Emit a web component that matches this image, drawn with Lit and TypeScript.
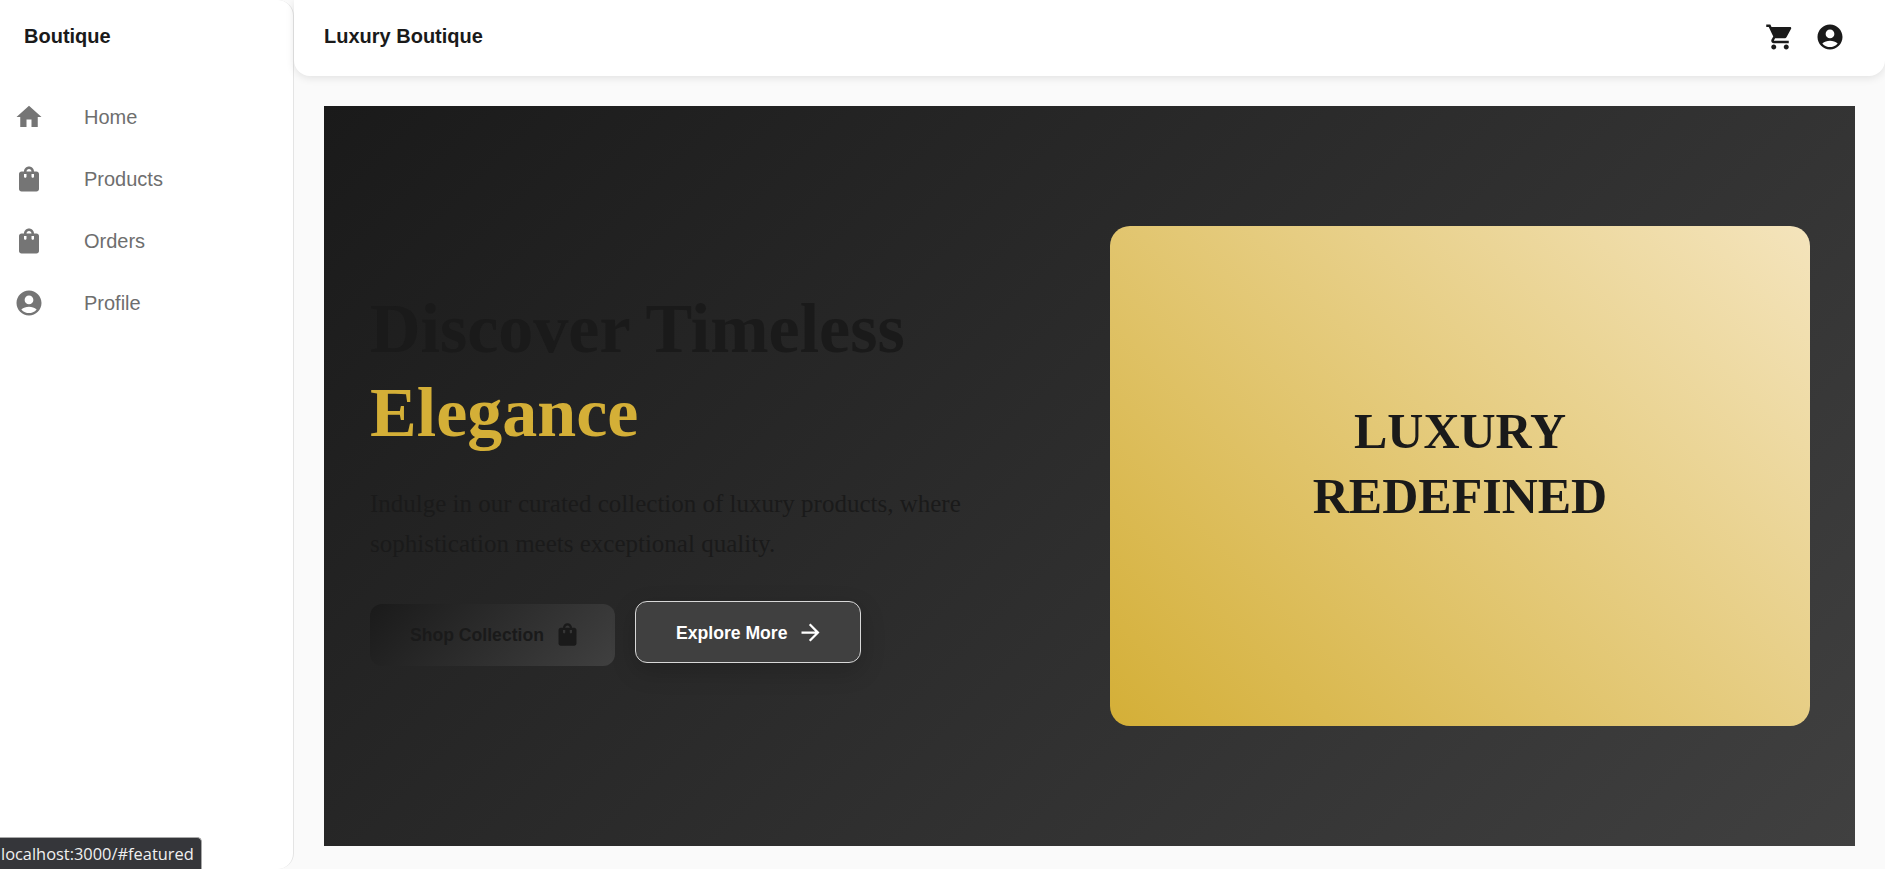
import { LitElement, html, css, svg } from "lit";
import { customElement } from "lit/decorators.js";

const HOME = "M10 20v-6h4v6h5v-8h3L12 3 2 12h3v8z";
const BAG = "M18 6h-2c0-2.21-1.79-4-4-4S8 3.79 8 6H6c-1.1 0-2 .9-2 2v12c0 1.1.9 2 2 2h12c1.1 0 2-.9 2-2V8c0-1.1-.9-2-2-2zm-6-2c1.1 0 2 .9 2 2h-4c0-1.1.9-2 2-2zm-2 6c0 .55-.45 1-1 1s-1-.45-1-1V8h2v2zm6 0c0 .55-.45 1-1 1s-1-.45-1-1V8h2v2z";
const PROFILE = "M12 2C6.48 2 2 6.48 2 12s4.48 10 10 10 10-4.48 10-10S17.52 2 12 2zm0 4c1.93 0 3.5 1.57 3.5 3.5S13.93 13 12 13s-3.5-1.57-3.5-3.5S10.07 6 12 6zm0 14c-2.03 0-4.43-.82-6.14-2.88C7.55 15.8 9.68 15 12 15s4.45.8 6.14 2.12C16.43 19.18 14.03 20 12 20z";
const CART = "M7 18c-1.1 0-1.99.9-1.99 2S5.9 22 7 22s2-.9 2-2-.9-2-2-2zM1 2v2h2l3.6 7.59-1.35 2.45c-.16.28-.25.61-.25.96 0 1.1.9 2 2 2h12v-2H7.42c-.14 0-.25-.11-.25-.25l.03-.12.9-1.63h7.45c.75 0 1.41-.41 1.75-1.03l3.58-6.49c.08-.14.12-.31.12-.48 0-.55-.45-1-1-1H5.21l-.94-2H1zm16 16c-1.1 0-1.99.9-1.99 2s.89 2 1.99 2 2-.9 2-2-.9-2-2-2z";
const ARROW = "m12 4-1.41 1.41L16.17 11H4v2h12.17l-5.58 5.59L12 20l8-8z";

const icon = (d: string, cls = "") => html`<svg class="icon ${cls}" viewBox="0 0 24 24" aria-hidden="true">${svg`<path d=${d}></path>`}</svg>`;

const NAV = [
  ["Home", HOME],
  ["Products", BAG],
  ["Orders", BAG],
  ["Profile", PROFILE],
];

@customElement("app-root")
export class AppRoot extends LitElement {
  static styles = css`
    :host {
      display: flex;
      width: 100%;
      height: 869px;
      overflow: hidden;
      background: #fafafa;
      font-family: "Liberation Sans", Arial, sans-serif;
      position: relative;
    }
    .icon { width: 30px; height: 30px; fill: currentColor; display: block; flex: none; }
    .sidebar {
      box-sizing: border-box;
      width: 294px;
      flex: none;
      height: 869px;
      background: #fff;
      border-right: 1px solid #e4e4e4;
      border-radius: 0 16px 16px 0;
    }
    .brand {
      height: 72px;
      display: flex;
      align-items: center;
      padding-left: 24px;
      font-size: 20px;
      font-weight: 700;
      color: #1a1a1a;
    }
    .nav { display: flex; flex-direction: column; padding-top: 14px; }
    .nav-item {
      height: 62px;
      display: flex;
      align-items: center;
      padding-left: 14px;
      color: #757575;
    }
    .nav-item span { margin-left: 40px; font-size: 20px; color: #6e6e6e; }
    .main { flex: 1; min-width: 0; display: flex; flex-direction: column; }
    .header {
      height: 76px;
      flex: none;
      box-sizing: border-box;
      background: #fff;
      border-radius: 0 0 16px 16px;
      box-shadow: 0 2px 8px rgba(0, 0, 0, 0.1);
      display: flex;
      align-items: center;
      justify-content: space-between;
      padding: 0 40px 3px 30px;
      color: #1a1a1a;
    }
    .title { font-size: 20px; font-weight: 700; }
    .actions { display: flex; gap: 20px; }
    .content { flex: 1; padding: 30px 30px 23px; min-height: 0; display: flex; }
    .hero {
      flex: 1;
      display: flex;
      align-items: center;
      justify-content: space-between;
      padding: 0 45px 0 46px;
      background: linear-gradient(135deg, #1a1a1a 0%, #404040 100%);
      font-family: "Liberation Serif", "Times New Roman", serif;
      color: #1a1a1a;
    }
    .copy { width: 640px; }
    h1 { margin: 0 0 29px; font-size: 70px; line-height: 84px; font-weight: 700; }
    h1 em { display: block; font-style: normal; color: #d4af37; }
    p { margin: 0 0 40px; font-size: 25px; line-height: 40px; width: 620px; }
    .buttons { display: flex; align-items: flex-start; gap: 20px; height: 62px; font-family: "Liberation Sans", Arial, sans-serif; }
    .btn {
      box-sizing: border-box;
      display: flex;
      align-items: center;
      gap: 10px;
      height: 62px;
      padding-left: 40px;
      border-radius: 12px;
      font-size: 17.6px;
      font-weight: 700;
    }
    .btn span { padding-top: 2px; }
    .btn .icon { width: 27px; height: 27px; }
    .shop {
      width: 245px;
      color: #1a1a1a;
      background: linear-gradient(135deg, #1a1a1a 0%, #404040 100%);
    }
    .explore {
      width: 226px;
      margin-top: -2.5px;
      color: #fff;
      background: #404040;
      border: 1.5px solid #d8d8d8;
      box-shadow: 0 8px 24px rgba(0, 0, 0, 0.18);
    }
    .card {
      box-sizing: border-box;
      width: 700px;
      height: 500px;
      flex: none;
      border-radius: 20px;
      background: linear-gradient(45deg, #d4af37 0%, #f4e4bc 100%);
      display: flex;
      align-items: center;
      justify-content: center;
      text-align: center;
      font-size: 50px;
      font-weight: 700;
      line-height: 65px;
      color: #1a1a1a;
    }
    .card div { margin-bottom: 24px; }
    .status {
      position: absolute;
      left: 0;
      bottom: 0;
      box-sizing: border-box;
      width: 202px;
      height: 32px;
      display: flex;
      align-items: center;
      padding-left: 1px;
      background: #35363a;
      border-top: 1px solid #a8a8a8;
      border-right: 1px solid #a8a8a8;
      border-radius: 0 5px 0 0;
      color: #f0f0f0;
      font-family: "Open Sans", sans-serif;
      font-size: 16.4px;
      white-space: nowrap;
    }
  `;

  render() {
    return html`
      <aside class="sidebar">
        <div class="brand">Boutique</div>
        <nav class="nav">
          ${NAV.map(([label, d]) => html`<div class="nav-item">${icon(d)}<span>${label}</span></div>`)}
        </nav>
      </aside>
      <div class="main">
        <header class="header">
          <div class="title">Luxury Boutique</div>
          <div class="actions">${icon(CART)}${icon(PROFILE)}</div>
        </header>
        <div class="content">
          <section class="hero">
            <div class="copy">
              <h1>Discover Timeless <em>Elegance</em></h1>
              <p>Indulge in our curated collection of luxury products, where sophistication meets exceptional quality.</p>
              <div class="buttons">
                <div class="btn shop"><span>Shop Collection</span>${icon(BAG)}</div>
                <div class="btn explore"><span>Explore More</span>${icon(ARROW)}</div>
              </div>
            </div>
            <div class="card"><div>LUXURY<br />REDEFINED</div></div>
          </section>
        </div>
      </div>
      <div class="status">localhost:3000/#featured</div>
    `;
  }
}
